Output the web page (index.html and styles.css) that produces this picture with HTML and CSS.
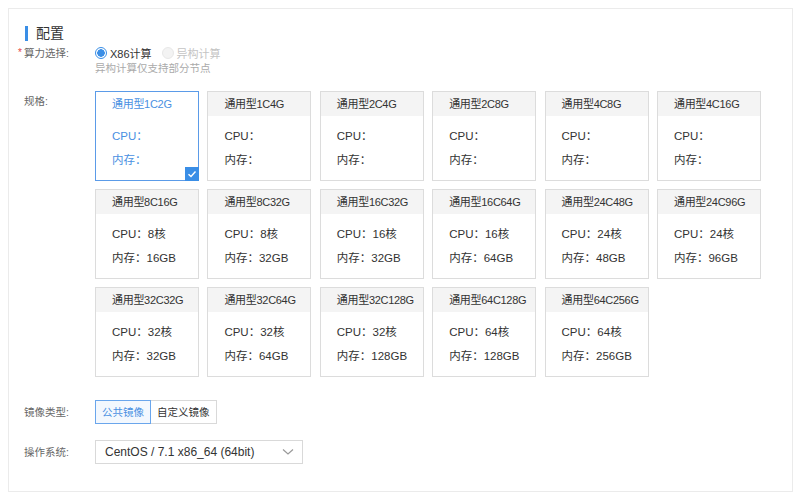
FILE: index.html
```html
<!DOCTYPE html>
<html lang="zh">
<head>
<meta charset="utf-8">
<link rel="stylesheet" href="styles.css">
</head>
<body>
<div class="panel">
  <div class="title"><span class="bar"></span>配置</div>

  <div class="row row-arch">
    <div class="label"><span class="req">*</span>算力选择:</div>
    <div class="field">
      <div class="radios">
        <span class="radio on"><span class="dot"></span>X86计算</span>
        <span class="radio off"><span class="dot"></span>异构计算</span>
      </div>
      <div class="hint">异构计算仅支持部分节点</div>
    </div>
  </div>

  <div class="row row-spec">
    <div class="label"><span class="req"></span>规格:</div>
    <div class="grid">
      <div class="card selected"><div class="head">通用型1C2G</div><div class="body"><div>CPU：</div><div>内存：</div></div><span class="check"><svg width="10" height="10" viewBox="0 0 10 10"><path d="M1.5 5.2 L4 7.5 L8.5 2.5" fill="none" stroke="#fff" stroke-width="1.4"/></svg></span></div>
      <div class="card"><div class="head">通用型1C4G</div><div class="body"><div>CPU：</div><div>内存：</div></div></div>
      <div class="card"><div class="head">通用型2C4G</div><div class="body"><div>CPU：</div><div>内存：</div></div></div>
      <div class="card"><div class="head">通用型2C8G</div><div class="body"><div>CPU：</div><div>内存：</div></div></div>
      <div class="card"><div class="head">通用型4C8G</div><div class="body"><div>CPU：</div><div>内存：</div></div></div>
      <div class="card"><div class="head">通用型4C16G</div><div class="body"><div>CPU：</div><div>内存：</div></div></div>

      <div class="card"><div class="head">通用型8C16G</div><div class="body"><div>CPU：8核</div><div>内存：16GB</div></div></div>
      <div class="card"><div class="head">通用型8C32G</div><div class="body"><div>CPU：8核</div><div>内存：32GB</div></div></div>
      <div class="card"><div class="head">通用型16C32G</div><div class="body"><div>CPU：16核</div><div>内存：32GB</div></div></div>
      <div class="card"><div class="head">通用型16C64G</div><div class="body"><div>CPU：16核</div><div>内存：64GB</div></div></div>
      <div class="card"><div class="head">通用型24C48G</div><div class="body"><div>CPU：24核</div><div>内存：48GB</div></div></div>
      <div class="card"><div class="head">通用型24C96G</div><div class="body"><div>CPU：24核</div><div>内存：96GB</div></div></div>

      <div class="card"><div class="head">通用型32C32G</div><div class="body"><div>CPU：32核</div><div>内存：32GB</div></div></div>
      <div class="card"><div class="head">通用型32C64G</div><div class="body"><div>CPU：32核</div><div>内存：64GB</div></div></div>
      <div class="card"><div class="head">通用型32C128G</div><div class="body"><div>CPU：32核</div><div>内存：128GB</div></div></div>
      <div class="card"><div class="head">通用型64C128G</div><div class="body"><div>CPU：64核</div><div>内存：128GB</div></div></div>
      <div class="card"><div class="head">通用型64C256G</div><div class="body"><div>CPU：64核</div><div>内存：256GB</div></div></div>
    </div>
  </div>

  <div class="row row-image">
    <div class="label"><span class="req"></span>镜像类型:</div>
    <div class="btngroup">
      <span class="btn active">公共镜像</span><span class="btn">自定义镜像</span>
    </div>
  </div>

  <div class="row row-os">
    <div class="label"><span class="req"></span>操作系统:</div>
    <div class="select">
      <span>CentOS / 7.1 x86_64 (64bit)</span>
      <svg width="12" height="8" viewBox="0 0 12 8"><path d="M1 1.5 L6 6 L11 1.5" fill="none" stroke="#999" stroke-width="1.2"/></svg>
    </div>
  </div>
</div>
</body>
</html>
```

FILE: styles.css
```css
* { box-sizing: border-box; }
html, body { margin: 0; padding: 0; background: #fff; }
body {
  font-family: "Liberation Sans", "Noto Sans CJK SC", sans-serif;
  font-size: 12px;
  color: #333;
}
.panel {
  margin: 8px 7px 8px 8px;
  height: 484px;
  border: 1px solid #ebebeb;
  padding: 16px 9px 0 9px;
}
.title {
  display: flex;
  align-items: center;
  height: 16px;
  font-size: 14px;
  line-height: 16px;
  color: #333;
  padding-left: 7px;
}
.bar {
  display: inline-block;
  width: 3px;
  height: 15px;
  background: #3a8ee6;
  margin-right: 8px;
}
.row { display: flex; }
.label {
  width: 77px;
  flex: none;
  color: #666;
  font-size: 10.5px;
  line-height: 20px;
  display: flex;
}
.req {
  width: 6px;
  color: #e64545;
  font-size: 10px;
}
.row-arch { margin-top: 2px; }
.radios { display: flex; align-items: center; height: 20px; font-size: 11px; }
.radio { display: flex; align-items: center; margin-right: 10px; }
.radio .dot {
  width: 12px; height: 12px; border-radius: 50%;
  margin-right: 3px;
}
.radio.on { color: #333; }
.radio.on .dot { border: 1px solid #3a8ee6; background: radial-gradient(circle, #3a8ee6 0 3.5px, #fff 4px); }
.radio.off { color: #c4c4c4; }
.radio.off .dot { border: 1px solid #e8e8e8; background: #f3f3f3; }
.hint { color: #aaa; font-size: 10.5px; line-height: 16px; margin-top: -3px; }

.row-spec { margin-top: 15px; }
.grid {
  display: grid;
  grid-template-columns: repeat(6, 104px);
  column-gap: 8.4px;
  row-gap: 8px;
}
.card {
  position: relative;
  height: 90px;
  border: 1px solid #dcdcdc;
  background: #fff;
}
.card .head {
  height: 24px;
  line-height: 24px;
  background: #f4f4f4;
  padding-left: 16px;
  color: #333;
  font-size: 11px;
  letter-spacing: -0.3px;
  white-space: nowrap;
}
.card .body { padding: 8px 0 0 16px; font-size: 11.5px; }
.card .body div { line-height: 24px; height: 24px; }
.card.selected { border-color: #5b9be8; }
.card.selected .head { background: #fff; color: #4a90e2; }
.card.selected .body { color: #4a90e2; }
.check {
  position: absolute;
  right: -1px; bottom: -1px;
  width: 14px; height: 14px;
  background: #3a8ee6;
  display: flex; align-items: center; justify-content: center;
}

.row-image { margin-top: 23px; align-items: center; }
.btngroup { display: flex; }
.btn {
  height: 24px;
  line-height: 22px;
  border: 1px solid #d9d9d9;
  padding: 0 6px;
  color: #333;
  background: #fff;
  font-size: 10.5px;
}
.btn + .btn { border-left: none; }
.btn.active {
  border-color: #6aa6ec;
  background: #f3f8fe;
  color: #4a90e2;
}

.row-os { margin-top: 16px; align-items: center; }
.select {
  width: 208px;
  height: 24px;
  border: 1px solid #d9d9d9;
  display: flex;
  align-items: center;
  justify-content: space-between;
  padding: 0 8px 0 9px;
  color: #333;
}
```
